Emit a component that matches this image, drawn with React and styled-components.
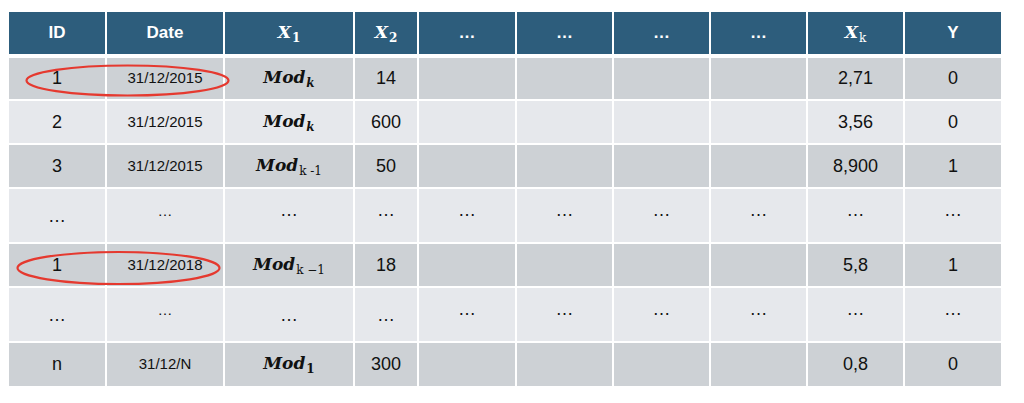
import React from "react";
import styled, { createGlobalStyle } from "styled-components";

const GlobalStyle = createGlobalStyle`
  body {
    margin: 0;
    background: #ffffff;
    font-family: "Liberation Sans", Arial, sans-serif;
  }
`;

const COLUMNS = "96px 116px 128px 62px 96px 95px 95px 95px 95px 96px";

const Page = styled.div`
  position: relative;
  width: 1024px;
  height: 403px;
  padding: 12px 0 0 9px;
  box-sizing: border-box;
`;

const HeaderRow = styled.div`
  display: grid;
  grid-template-columns: ${COLUMNS};
  column-gap: 2px;
  height: 42px;
  margin-bottom: 4px;
`;

const HeadCell = styled.div`
  background: #2d5d7c;
  color: #ffffff;
  font-weight: bold;
  font-size: 17px;
  display: flex;
  align-items: center;
  justify-content: center;
`;

const Body = styled.div`
  display: grid;
  grid-template-columns: ${COLUMNS};
  grid-template-rows: 41px 42px 42px 53px 42px 53px 43px;
  gap: 2px;
`;

const Cell = styled.div`
  background: ${(props) => (props.$dark ? "#cdd1d5" : "#e6e8ec")};
  color: #111111;
  font-size: ${(props) => (props.$small ? "15px" : "18px")};
  display: flex;
  align-items: center;
  justify-content: center;
  padding-bottom: ${(props) => (props.$shift < 0 ? -props.$shift * 2 : 0)}px;
  padding-top: ${(props) => (props.$shift > 0 ? props.$shift * 2 : 0)}px;
  box-sizing: border-box;
`;

const MathVar = styled.span`
  font-family: "DejaVu Serif", "Liberation Serif", serif;
  font-weight: bold;
  font-style: italic;
  font-size: 17px;
`;

const Sub = styled.sub`
  font-family: "DejaVu Serif", "Liberation Serif", serif;
  font-size: 12px;
  font-weight: ${(props) => (props.$bold ? "bold" : "normal")};
  font-style: ${(props) => (props.$italic ? "italic" : "normal")};
  vertical-align: -4px;
  margin-left: 1px;
`;

const Overlay = styled.svg`
  position: absolute;
  top: 0;
  left: 0;
  pointer-events: none;
`;

const Mod = ({ sub, italic, bold }) => (
  <MathVar>
    Mod
    <Sub $italic={italic} $bold={bold}>
      {sub}
    </Sub>
  </MathVar>
);

const headers = [
  "ID",
  "Date",
  <MathVar key="x1">
    X<Sub $bold>1</Sub>
  </MathVar>,
  <MathVar key="x2">
    X<Sub $bold>2</Sub>
  </MathVar>,
  "…",
  "…",
  "…",
  "…",
  <MathVar key="xk">
    X<Sub>k</Sub>
  </MathVar>,
  "Y",
];

const dots = (shift) => ({ text: "…", shift });

const rows = [
  ["1", { text: "31/12/2015", small: true, shift: -1 }, <Mod sub="k" italic bold />, "14", "", "", "", "", "2,71", "0"],
  ["2", { text: "31/12/2015", small: true, shift: -1 }, <Mod sub="k" italic bold />, "600", "", "", "", "", "3,56", "0"],
  ["3", { text: "31/12/2015", small: true, shift: -1 }, <Mod sub="k -1" />, "50", "", "", "", "", "8,900", "1"],
  [dots(1), { ...dots(-5), small: true }, dots(-5), dots(-5), dots(-5), dots(-5), dots(-5), dots(-5), dots(-5), dots(-5)],
  ["1", { text: "31/12/2018", small: true, shift: -1 }, <Mod sub="k −1" />, "18", "", "", "", "", "5,8", "1"],
  [dots(1), { ...dots(-5), small: true }, dots(1), dots(1), dots(-5), dots(-5), dots(-5), dots(-5), dots(-5), dots(-5)],
  ["n", { text: "31/12/N", small: true, shift: -1 }, <Mod sub="1" bold />, "300", "", "", "", "", "0,8", "0"],
];

const App = () => (
  <Page>
    <GlobalStyle />
    <HeaderRow>
      {headers.map((h, i) => (
        <HeadCell key={i}>{h}</HeadCell>
      ))}
    </HeaderRow>
    <Body>
      {rows.map((row, r) =>
        row.map((cell, c) => {
          const obj =
            cell && typeof cell === "object" && "text" in cell
              ? cell
              : { text: cell };
          return (
            <Cell
              key={`${r}-${c}`}
              $dark={r % 2 === 0}
              $small={obj.small}
              $shift={obj.shift || 0}
            >
              {obj.text}
            </Cell>
          );
        })
      )}
    </Body>
    <Overlay width="1024" height="403">
      <ellipse cx="127.5" cy="80.5" rx="101" ry="15" fill="none" stroke="#e5392f" strokeWidth="2.2" />
      <ellipse cx="118.5" cy="268" rx="101" ry="16" fill="none" stroke="#e5392f" strokeWidth="2.2" />
    </Overlay>
  </Page>
);

export default App;
